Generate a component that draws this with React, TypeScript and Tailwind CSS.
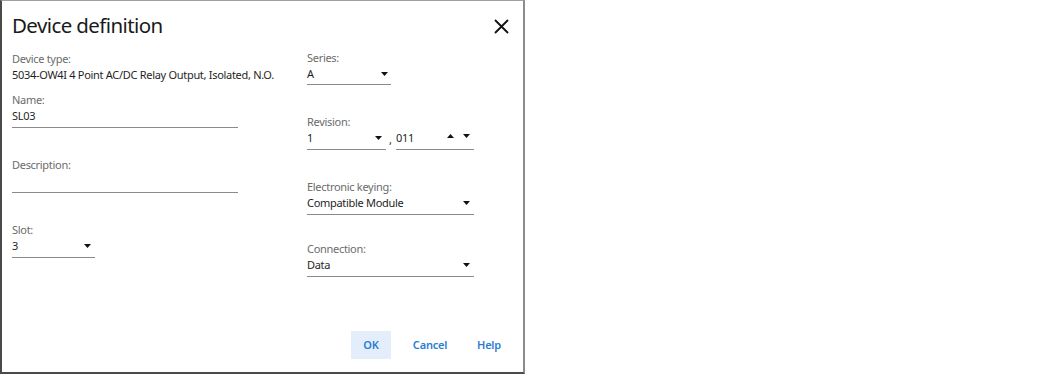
import React from 'react';

const font = { fontFamily: '"Noto Sans", "Open Sans", sans-serif' };

function Caret({ up = false }: { up?: boolean }) {
  return (
    <svg width="7" height="4" viewBox="0 0 7 4" className="shrink-0">
      {up ? <path d="M0 4 L3.5 0 L7 4 Z" fill="#111" /> : <path d="M0 0 L7 0 L3.5 4 Z" fill="#111" />}
    </svg>
  );
}

function Label({ children }: { children: React.ReactNode }) {
  return <div className="h-4 text-[11px] leading-4 tracking-[-0.3px] text-[#6b6b6b]">{children}</div>;
}

function Field({ value, width, caret = true }: { value: string; width: string; caret?: boolean }) {
  return (
    <div className={`${width} h-5 border-b border-[#8a8a8a] flex items-start justify-between pr-[4px]`}>
      <span className="text-[11px] leading-4 tracking-[-0.3px] text-[#1f1f1f]">{value}</span>
      {caret && <span className="mt-[6px]"><Caret /></span>}
    </div>
  );
}

export default function App() {
  return (
    <div className="w-[1050px] h-[375px] bg-white" style={font}>
      <div className="w-[525px] h-[374px] bg-white border-l-2 border-b-2 border-t border-r-2 border-l-[#4a4a4a] border-b-[#4a4a4a] border-t-[#a0a0a0] border-r-[#8c8c8c] flex flex-col">
        {/* Header */}
        <div className="flex items-start justify-between pl-[10px] pr-[14px] pt-[10px]">
          <h1 className="text-[20.5px] leading-7 tracking-[-0.6px] text-[#1a1a1a]">Device definition</h1>
          <button className="mt-[8px] text-[#111]">
            <svg width="15" height="15" viewBox="0 0 15 15">
              <path d="M1 1 L14 14 M14 1 L1 14" stroke="#111" strokeWidth="1.8" />
            </svg>
          </button>
        </div>

        <div className="flex flex-1 pl-[10px]">
          {/* Left column */}
          <div className="w-[295px] flex flex-col pt-[12px]">
            <Label>Device type:</Label>
            <div className="h-4 text-[11px] leading-4 tracking-[-0.3px] text-[#1f1f1f]">
              5034-OW4I 4 Point AC/DC Relay Output, Isolated, N.O.
            </div>
            <div className="mt-[9px]">
              <Label>Name:</Label>
              <Field value="SL03" width="w-[226px]" caret={false} />
            </div>
            <div className="mt-[29px]">
              <Label>Description:</Label>
              <Field value="" width="w-[226px]" caret={false} />
            </div>
            <div className="mt-[29px]">
              <Label>Slot:</Label>
              <Field value="3" width="w-[83px]" />
            </div>
          </div>

          {/* Right column */}
          <div className="flex flex-col pt-[11px]">
            <Label>Series:</Label>
            <div className="h-[19px] w-[84px] border-b border-[#8a8a8a] flex items-start justify-between pr-[3px]">
              <span className="text-[11px] leading-4 text-[#1f1f1f]">A</span>
              <span className="mt-[6px]"><Caret /></span>
            </div>
            <div className="mt-[29px]">
              <Label>Revision:</Label>
              <div className="flex items-start">
                <Field value="1" width="w-[79px]" />
                <span className="text-[11px] leading-4 text-[#1f1f1f] w-[10px] pl-[3px] pt-[2px]">,</span>
                <div className="w-[78px] h-5 border-b border-[#8a8a8a] flex items-start justify-between pr-[4px]">
                  <span className="text-[11px] leading-4 tracking-[-0.3px] text-[#1f1f1f]">011</span>
                  <span className="flex gap-[9px] mt-[4px]">
                    <Caret up />
                    <Caret />
                  </span>
                </div>
              </div>
            </div>
            <div className="mt-[29px]">
              <Label>Electronic keying:</Label>
              <Field value="Compatible Module" width="w-[167px]" />
            </div>
            <div className="mt-[26px]">
              <Label>Connection:</Label>
              <Field value="Data" width="w-[167px]" />
            </div>
          </div>
        </div>

        {/* Footer */}
        <div className="flex justify-end items-center gap-[6px] pr-[14px] pb-[13px]">
          <button className="w-[40px] h-[28px] bg-[#e3eefa] text-[11px] font-semibold tracking-[-0.2px] text-[#2a7dd4]">OK</button>
          <button className="w-[66px] h-[28px] text-[11px] font-semibold tracking-[-0.2px] text-[#2a7dd4]">Cancel</button>
          <button className="w-[40px] h-[28px] text-[11px] font-semibold tracking-[-0.2px] text-[#2a7dd4]">Help</button>
        </div>
      </div>
    </div>
  );
}
